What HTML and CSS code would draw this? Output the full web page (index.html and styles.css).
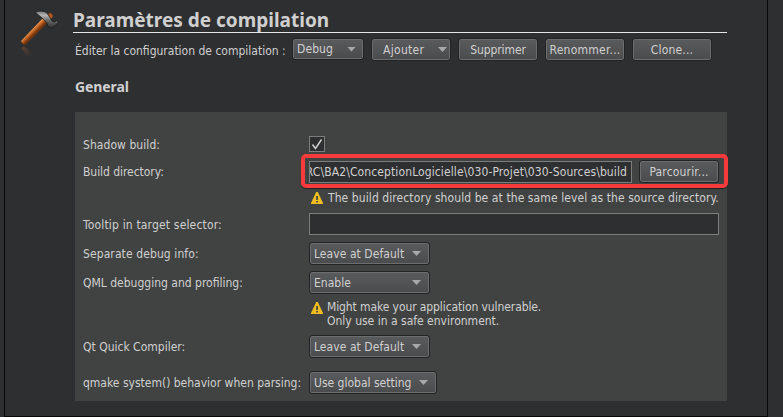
FILE: index.html
```
<!DOCTYPE html>
<html lang="fr">
<head>
<meta charset="utf-8">
<title>Paramètres de compilation</title>
<link rel="stylesheet" href="styles.css">
</head>
<body>
<main class="page">
  <svg class="hammer" viewBox="0 0 44 58" width="44" height="58" aria-hidden="true">
    <defs>
      <linearGradient id="wood" gradientUnits="userSpaceOnUse" x1="17" y1="27" x2="21.5" y2="31.5"><stop offset="0" stop-color="#b5591d"/><stop offset=".3" stop-color="#e79455"/><stop offset=".6" stop-color="#c5631f"/><stop offset="1" stop-color="#74370d"/></linearGradient>
      <linearGradient id="steel" x1="0" y1="0" x2="0" y2="1"><stop offset="0" stop-color="#777"/><stop offset=".25" stop-color="#b4b4b4"/><stop offset=".55" stop-color="#666"/><stop offset="1" stop-color="#2a2a2a"/></linearGradient>
      <linearGradient id="shade" gradientUnits="userSpaceOnUse" x1="7" y1="46" x2="17" y2="56"><stop offset="0" stop-color="#6b4a34"/><stop offset="1" stop-color="#2e2f30"/></linearGradient>
    </defs>
    <path fill="url(#shade)" opacity=".7" d="M6 48l3-2 10 9-4 2-3-1z"/>
    <path fill="#b3561c" d="M33 14l3-1 2 3-2 3-4-2z"/>
    <path fill="url(#wood)" d="M6 41L28 18l5 4L10 45q-2 0-4-4z"/>
    <path fill="url(#steel)" stroke="#171717" stroke-width=".7" d="M20 12.5Q27 9.500 32 13L37 21l3 1 1-2 2.500 2.500L37 28.500 33 27l-1-4-5-5q-3-3-7-5.500z"/>
  </svg>
  <div class="content">
    <h1 class="title"><span>Paramètres de compilation</span></h1>
    <div class="toolbar">
      <span class="caption">Éditer la configuration de compilation :</span>
      <button class="btn combo debug"><span class="t-debug">Debug</span><i class="arrow"></i></button>
      <button class="btn menu"><span class="t-add">Ajouter</span><i class="arrow"></i></button>
      <button class="btn"><span class="t-del">Supprimer</span></button>
      <button class="btn"><span class="t-ren">Renommer...</span></button>
      <button class="btn"><span class="t-clone">Clone...</span></button>
    </div>
    <h2 class="section">General</h2>
    <section class="panel">
      <div class="row r-shadow"><label class="low"><span class="t-shadow">Shadow build:</span></label>
        <div class="check"><svg viewBox="0 0 16 16" width="16" height="16"><path d="M3.5 8.5L6.5 12.5 12.5 3.5" fill="none" stroke="#d0d0d0" stroke-width="1.5"/></svg></div></div>
      <div class="row r-dir"><label><span class="t-dir">Build directory:</span></label>
        <div class="field path"><span class="t-path">RC\BA2\ConceptionLogicielle\030-Projet\030-Sources\build</span></div>
        <button class="btn browse"><span class="t-browse">Parcourir...</span></button>
        <div class="highlight"></div></div>
      <div class="row r-warn1"><label></label>
        <svg class="warn" viewBox="0 0 12 12" width="12" height="12"><path fill="#f0bd21" d="M5.2 0h1.6L12 11v1H0v-1z"/><path fill="#414342" d="M5.2 4h1.7v4H5.2zM5.2 9h1.7v1.600H5.2z"/></svg>
        <span class="t-w1">The build directory should be at the same level as the source directory.</span></div>
      <div class="row r-tip"><label class="low"><span class="t-tip">Tooltip in target selector:</span></label><div class="field"></div></div>
      <div class="row r-sep"><label><span class="t-sep">Separate debug info:</span></label><button class="btn combo"><span class="t-leave">Leave at Default</span><i class="arrow"></i></button></div>
      <div class="row r-qml"><label>QML debugging and profiling:</label><button class="btn combo">Enable<i class="arrow"></i></button></div>
      <div class="row r-warn2"><label></label>
        <svg class="warn" viewBox="0 0 12 12" width="12" height="12"><path fill="#f0bd21" d="M5.2 0h1.6L12 11v1H0v-1z"/><path fill="#414342" d="M5.2 4h1.7v4H5.2zM5.2 9h1.7v1.600H5.2z"/></svg>
        <div class="lines"><span class="t-w2">Might make your application vulnerable.</span><br><span>Only use in a safe environment.</span></div></div>
      <div class="row r-qt"><label>Qt Quick Compiler:</label><button class="btn combo"><span class="t-leave">Leave at Default</span><i class="arrow"></i></button></div>
      <div class="row r-qmake"><label>qmake system() behavior when parsing:</label><button class="btn combo wide">Use global setting<i class="arrow"></i></button></div>
    </section>
  </div>
</main>
</body>
</html>
```

FILE: styles.css
```
* { box-sizing: border-box; }
body { margin: 0; background: #2e2f30; color: #d0d0d0; font: 12px/14px "DejaVu Sans Condensed", "DejaVu Sans", sans-serif; overflow: hidden; }
.page { display: flex; width: 764px; height: 417px; margin-left: 4px; border: 1px solid #080808; border-top: 0; }
.hammer { flex: none; margin: 0 0 0 10px; }
.content { width: 654px; margin-left: 14px; }
.title { height: 33px; margin: 0; padding-top: 9px; border-bottom: 1px solid #e6e6e6; font: bold 19px/22px "Noto Sans", sans-serif; white-space: nowrap; }
.toolbar { display: flex; align-items: flex-start; height: 29px; margin-top: 5px; padding-left: 2px; }
.caption { width: 217px; flex: none; padding-top: 6px; white-space: nowrap; }
.btn { display: flex; align-items: center; justify-content: center; flex: none; width: 80px; height: 23px; margin: 0 7px 0 0; padding: 1px 0 0; font: inherit; color: #d0d0d0; white-space: nowrap; background: linear-gradient(#5a5b5d, #4a4b4d) padding-box; border: 1px solid #222324; border-radius: 3px; box-shadow: inset 0 0 0 1px #6c6d6e; }
.combo { justify-content: space-between; width: 121px; padding: 0 8px 0 4px; margin: 0; }
.debug { width: 72px; height: 22px; margin-right: 7px; padding: 0 7px 0 4px; }
.arrow { width: 9px; height: 5px; background: #a8a9aa; clip-path: polygon(0 0, 100% 0, 50% 100%); }
.menu { justify-content: space-between; padding: 1px 3px 0 11px; }
.menu .arrow { margin-bottom: 1px; }
.section { height: 18px; margin: 11px 0 0 2px; font: bold 14px/18px "Noto Sans", sans-serif; letter-spacing: -.1px; }
.panel { width: 652px; height: 289px; margin: 16px 0 0 2px; padding: 24px 8px 0; background: #414342; }
.row { display: flex; align-items: center; position: relative; white-space: nowrap; height: 23px; }
.row label { width: 226px; flex: none; }
.row .low { padding-top: 2px; }
.r-shadow { height: 16px; }
.r-dir { margin-top: 8px; }
.r-warn1 { height: 16px; margin-top: 7px; }
.r-tip { height: 22px; margin-top: 7px; }
.r-sep { margin-top: 7px; }
.r-qml { margin-top: 6px; }
.r-warn2 { height: 29px; margin-top: 6px; align-items: flex-start; }
.r-qt { margin-top: 6px; }
.r-qmake { margin-top: 13px; }
.check { width: 16px; height: 16px; background: #2e2f30; box-shadow: inset 0 0 0 1px #7c7e7d; }
.check svg { display: block; }
.field { width: 410px; height: 22px; border: 1px solid #7c7e7d; background: #2e2f30; }
.path { display: flex; align-items: center; justify-content: flex-end; width: 323px; margin-right: 7px; padding-right: 4px; overflow: hidden; }
.browse { margin: 0; }
.highlight { position: absolute; left: 218px; top: -6px; width: 427px; height: 34px; border: 4px solid #f53b3b; border-radius: 5px; box-shadow: 0 1px 1px #222; }
.warn { margin: 0 5px 0 2px; flex: none; }
.r-warn2 .warn { margin: 2px 4px 0 2px; }
.wide { width: 128px; }

.t-debug, .t-sep { letter-spacing: .1px; }
.t-add { letter-spacing: .3px; }
.t-del { letter-spacing: -.1px; }
.t-ren { letter-spacing: .25px; }
.t-clone, .t-browse { letter-spacing: .17px; }
.t-shadow, .t-leave { letter-spacing: .06px; }
.t-dir { letter-spacing: -.05px; }
.t-tip { letter-spacing: .17px; }
.t-path { letter-spacing: .11px; }
.t-w1 { letter-spacing: .085px; }
.t-w2 { letter-spacing: -.1px; }
```
